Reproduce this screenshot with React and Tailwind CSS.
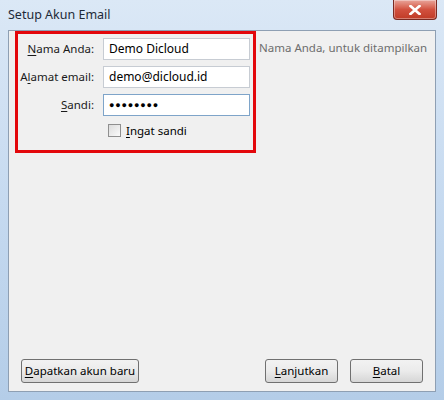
export default function App() {
  const rows = [
    { label: "Nama Anda:", key: "N", rest: "ama Anda:", value: "Demo Dicloud" },
    { label: "Alamat email:", pre: "A", key: "l", rest: "amat email:", value: "demo@dicloud.id" },
    { label: "Sandi:", key: "S", rest: "andi:", value: "●●●●●●●●", password: true },
  ];

  return (
    <div
      className="w-[444px] h-[400px] flex flex-col bg-gradient-to-b from-[#dbe8f6] via-[#c6daf0] to-[#b4cde8] px-[8px] pb-[8px] text-[11.5px] text-black"
      style={{ fontFamily: '"Noto Sans", "Open Sans", sans-serif' }}
    >
      {/* title bar */}
      <div className="h-[30px] flex items-start justify-between">
        <div className="pt-[6px] text-[12.5px] text-[#1e2a38]">Setup Akun Email</div>
        <div className="w-[44px] h-[20px] mr-[-1px] rounded-b-[4px] border border-[#7a2a22] border-t-0 bg-gradient-to-b from-[#e8a49a] via-[#d2513f] to-[#c03a26] flex items-center justify-center shadow-[inset_0_0_0_1px_rgba(255,255,255,0.35)]">
          <svg width="12" height="10" viewBox="0 0 12 10">
            <path d="M1.5 1 L10.5 9 M10.5 1 L1.5 9" stroke="#fff" strokeWidth="2.6" strokeLinecap="square" />
          </svg>
        </div>
      </div>

      {/* client area */}
      <div className="flex-1 flex flex-col bg-[#f0f0f0] border border-[#8e9fb3]">
        <div className="flex items-start">
          <div className="ml-[6px] w-[241px] h-[122px] shrink-0 border-[3px] border-[#e3070b] pt-[4px] pr-[3px] flex flex-col gap-[6px]">
            {rows.map((r) => (
              <div key={r.label} className="flex items-center">
                <div className="w-[85px] shrink-0 whitespace-nowrap text-right pr-[9px] text-[#1a1a1a]">
                  {r.pre}
                  <span className="underline underline-offset-[2px]">{r.key}</span>
                  {r.rest}
                </div>
                <div
                  className={
                    "flex-1 h-[22px] bg-white border px-[5px] flex items-center " +
                    (r.password ? "border-[#7ea4c9]" : "border-[#c7ccd3]")
                  }
                >
                  <span className={r.password ? "text-[9px] tracking-[0.8px]" : "text-[12px] whitespace-nowrap"}>{r.value}</span>
                </div>
              </div>
            ))}
            <div className="flex items-center pl-[90px] gap-[5px]">
              <div className="w-[13px] h-[13px] border border-[#8f8f8f] bg-gradient-to-br from-[#dcdcdc] to-[#fafafa]" />
              <span className="whitespace-nowrap">
                <span className="underline underline-offset-[2px]">I</span>ngat sandi
              </span>
            </div>
          </div>
          <div className="ml-[3px] mt-[8px] whitespace-nowrap text-[#6d6d6d]">Nama Anda, untuk ditampilkan</div>
        </div>

        <div className="flex-1" />

        {/* buttons */}
        <div className="flex items-center px-[12px] pb-[8px]">
          <button className="h-[24px] w-[118px] whitespace-nowrap rounded-[3px] border border-[#707070] bg-gradient-to-b from-[#f2f2f2] via-[#ebebeb] to-[#d6d6d6]">
            <span className="underline underline-offset-[2px]">D</span>apatkan akun baru
          </button>
          <div className="flex-1" />
          <button className="h-[24px] w-[73px] rounded-[3px] border border-[#707070] bg-gradient-to-b from-[#f2f2f2] via-[#ebebeb] to-[#d6d6d6]">
            <span className="underline underline-offset-[2px]">L</span>anjutkan
          </button>
          <button className="ml-[12px] h-[24px] w-[73px] rounded-[3px] border border-[#707070] bg-gradient-to-b from-[#f2f2f2] via-[#ebebeb] to-[#d6d6d6]">
            <span className="underline underline-offset-[2px]">B</span>atal
          </button>
        </div>
      </div>
    </div>
  );
}
